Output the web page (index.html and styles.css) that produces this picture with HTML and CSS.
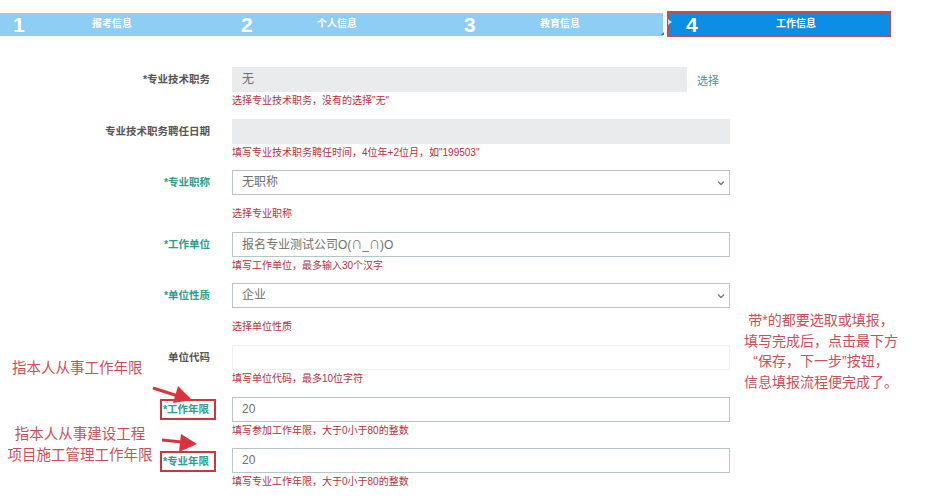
FILE: index.html
```html
<!DOCTYPE html>
<html lang="zh-CN">
<head>
    <meta charset="UTF-8">
    <title>工作信息</title>
    <link rel="stylesheet" href="styles.css">
</head>
<body>

    <div class="steps">
        <div class="step first"><span class="num">1</span><span class="name">报考信息</span></div>
        <div class="step second"><span class="num">2</span><span class="name">个人信息</span></div>
        <div class="step third"><span class="num">3</span><span class="name">教育信息</span></div>
        <div class="step active"><span class="num">4</span><span class="name">工作信息</span></div>
    </div>

    <div class="form">
        <div class="row">
            <div class="label">*专业技术职务</div>
            <div class="field">
                <div class="control">
                    <div class="input gray short">无</div>
                    <a class="pick">选择</a>
                </div>
                <div class="hint">选择专业技术职务，没有的选择"无"</div>
            </div>
        </div>

        <div class="row">
            <div class="label">专业技术职务聘任日期</div>
            <div class="field">
                <div class="input gray"></div>
                <div class="hint">填写专业技术职务聘任时间，4位年+2位月，如"199503"</div>
            </div>
        </div>

        <div class="row select">
            <div class="label teal">*专业职称</div>
            <div class="field">
                <div class="input dropdown">
                    <span>无职称</span>
                    <svg class="chevron" width="8" height="6" viewBox="0 0 8 6"><path d="M1 1.5 L4 4.5 L7 1.5" fill="none" stroke="#777" stroke-width="1.3"/></svg>
                </div>
                <div class="hint">选择专业职称</div>
            </div>
        </div>

        <div class="row">
            <div class="label teal">*工作单位</div>
            <div class="field">
                <div class="input">报名专业测试公司O(<span class="cjk">∩</span>_<span class="cjk">∩</span>)O</div>
                <div class="hint">填写工作单位，最多输入30个汉字</div>
            </div>
        </div>

        <div class="row select">
            <div class="label teal">*单位性质</div>
            <div class="field">
                <div class="input dropdown">
                    <span>企业</span>
                    <svg class="chevron" width="8" height="6" viewBox="0 0 8 6"><path d="M1 1.5 L4 4.5 L7 1.5" fill="none" stroke="#777" stroke-width="1.3"/></svg>
                </div>
                <div class="hint">选择单位性质</div>
            </div>
        </div>

        <div class="row">
            <div class="label">单位代码</div>
            <div class="field">
                <div class="input faint"></div>
                <div class="hint">填写单位代码，最多10位字符</div>
            </div>
        </div>

        <div class="row">
            <div class="label teal"><span class="mark">*工作年限</span></div>
            <div class="field">
                <div class="input">20</div>
                <div class="hint">填写参加工作年限，大于0小于80的整数</div>
            </div>
        </div>

        <div class="row">
            <div class="label teal"><span class="mark">*专业年限</span></div>
            <div class="field">
                <div class="input">20</div>
                <div class="hint">填写专业工作年限，大于0小于80的整数</div>
            </div>
        </div>
    </div>

    <!-- пометки поверх скриншота -->
    <div class="note note-work">指本人从事工作年限</div>
    <div class="note note-pro">指本人从事建设工程<br>项目施工管理工作年限</div>
    <div class="note note-tip">带*的都要选取或填报，<br>填写完成后，点击最下方<br>“保存，下一步”按钮，<br>信息填报流程便完成了。</div>

    <svg class="arrows" width="926" height="500" viewBox="0 0 926 500">
        <line x1="153" y1="388" x2="178" y2="396" stroke="#d9343d" stroke-width="3"/>
        <polygon points="192,400 173,403 178,386" fill="#d9343d"/>
        <line x1="162" y1="440" x2="182" y2="442" stroke="#d9343d" stroke-width="3"/>
        <polygon points="197,444 179,452 181,434" fill="#d9343d"/>
    </svg>

</body>
</html>
```

FILE: styles.css
```css
body {
    margin: 0;
    width: 926px;
    height: 500px;
    overflow: hidden;
    position: relative;
    background: #fff;
    font-family: "Liberation Sans", "Noto Sans CJK SC", sans-serif;
}

/* --- шаги --- */
.steps {
    display: flex;
    align-items: center;
    margin-top: 11px;
    height: 26px;
}

.step {
    display: flex;
    align-items: center;
    box-sizing: border-box;
    height: 23px;
    padding-left: 19px;
    background: #8ecdf4;
    color: #fff;
}
.step.first { width: 222px; padding-left: 13px; }
.step.second { width: 223px; }
.step.third { width: 218px; }
.step.first .num { width: 79px; }

.step.active {
    position: relative;
    width: 224px;
    height: 26px;
    margin-left: 4px;
    padding-left: 17px;
    background: #0c8ee6;
    border: 2px solid #c64a4e;
}
.step.active::before {
    content: "";
    position: absolute;
    left: -1px;
    top: 6px;
    border-left: 4px solid #b6dff8;
    border-top: 3px solid transparent;
    border-bottom: 3px solid transparent;
}
.step.third::after {
    content: "";
    position: absolute;
    left: 661px;
    top: 32px;
    border-right: 3px solid #3b6f8f;
    border-top: 3px solid transparent;
}

.num { width: 76px; font-size: 21px; font-weight: bold; line-height: 1; }
.step.active .num { width: 90px; }
.name { font-size: 10px; font-weight: bold; margin-bottom: 3px; }

/* --- форма --- */
.form { margin-top: 30px; }

.row {
    display: flex;
    align-items: flex-start;
    margin-bottom: 10.6px;
}

.label {
    width: 210px;
    text-align: right;
    line-height: 25px;
    font-size: 10.5px;
    font-weight: bold;
    color: #555;
}
.label.teal { color: #2e9d8e; }

.mark {
    display: inline-block;
    line-height: 15px;
    padding: 1px 5px 1px 1px;
    margin-right: -6px;
    border: 2px solid #c8383f;
    vertical-align: middle;
}

.field { margin-left: 22px; width: 498px; }

.control { display: flex; align-items: center; }

.input {
    box-sizing: border-box;
    height: 25px;
    line-height: 23px;
    padding-left: 9px;
    border: 1px solid #b7c4c8;
    background: #fff;
    font-size: 12px;
    color: #707070;
}
.input.gray { background: #e9ebed; border-color: #e9ebed; }
.input.short { width: 455px; }
.input.faint { border-color: #eef0f0; }

.cjk { font-family: "Noto Sans CJK SC", sans-serif; font-size: 11px; }

.dropdown {
    display: flex;
    justify-content: space-between;
    align-items: center;
    padding-right: 4px;
}

.pick { margin-left: 10px; font-size: 11px; color: #3f97ad; }

.hint {
    margin-top: 2px;
    font-size: 10px;
    line-height: 14px;
    color: #b5303f;
}
.row.select .hint { margin-top: 12px; }

/* --- пометки --- */
.note {
    position: absolute;
    color: #c9505a;
    text-align: center;
}
.note-work { left: 12px; top: 359px; font-size: 14.5px; line-height: 18px; }
.note-pro { left: 6px; top: 424px; width: 148px; font-size: 14.5px; line-height: 21px; }
.note-tip { left: 736px; top: 310px; width: 170px; font-size: 14px; line-height: 20.5px; }

.arrows { position: absolute; left: 0; top: 0; pointer-events: none; }
```
